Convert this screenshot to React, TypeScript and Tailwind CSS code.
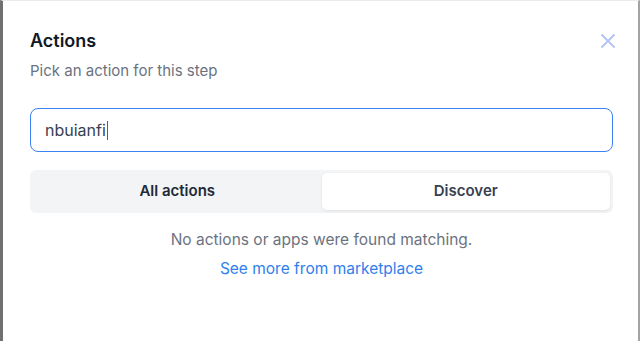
import React from "react";

export default function App() {
  return (
    <div
      className="relative w-[640px] h-[341px] bg-white border-l-[3px] border-l-[#707070] border-t border-t-[#ebebeb] border-r-2 border-r-[#a3a3a3] pl-[27px] pr-[25px] overflow-hidden"
      style={{ fontFamily: "Inter, 'Noto Sans', sans-serif" }}
    >
      <div className="pt-[26px]">
        <h1 className="text-[18px] leading-[28px] font-semibold text-[#111827]">Actions</h1>
        <p className="mt-[5px] text-[15px] leading-[22px] text-[#6b7280]">Pick an action for this step</p>
      </div>
      <button className="absolute top-[32px] right-[22px] w-[16px] h-[16px] text-[#b1c3f6]" aria-label="Close">
        <svg viewBox="0 0 16 16" width="16" height="16" fill="none" stroke="currentColor" strokeWidth="1.8" strokeLinecap="round">
          <path d="M2 2 L14 14 M14 2 L2 14" />
        </svg>
      </button>
      <div className="mt-[26px] h-[44px] rounded-[8px] border border-[#3b82f6] flex items-center px-[14px]">
        <span className="text-[16px] text-[#374151]">nbuianfi</span>
        <span className="w-[1px] h-[19px] bg-[#2563eb] ml-[1px]" />
      </div>
      <div className="mt-[18px] h-[43px] rounded-[6px] bg-[#f3f4f6] flex p-[3px]">
        <div className="flex-1 flex items-center justify-center text-[15px] font-semibold text-[#1f2937]">All actions</div>
        <div className="flex-1 flex items-center justify-center rounded-[5px] bg-white shadow-[0_1px_3px_rgba(0,0,0,0.08)] text-[15px] font-semibold text-[#374151]">Discover</div>
      </div>
      <div className="mt-[16px] flex flex-col items-center">
        <p className="text-[15.5px] leading-[22px] text-[#6b7280]">No actions or apps were found matching.</p>
        <a className="mt-[7px] text-[15.5px] leading-[22px] text-[#2f80ed]">See more from marketplace</a>
      </div>
    </div>
  );
}
